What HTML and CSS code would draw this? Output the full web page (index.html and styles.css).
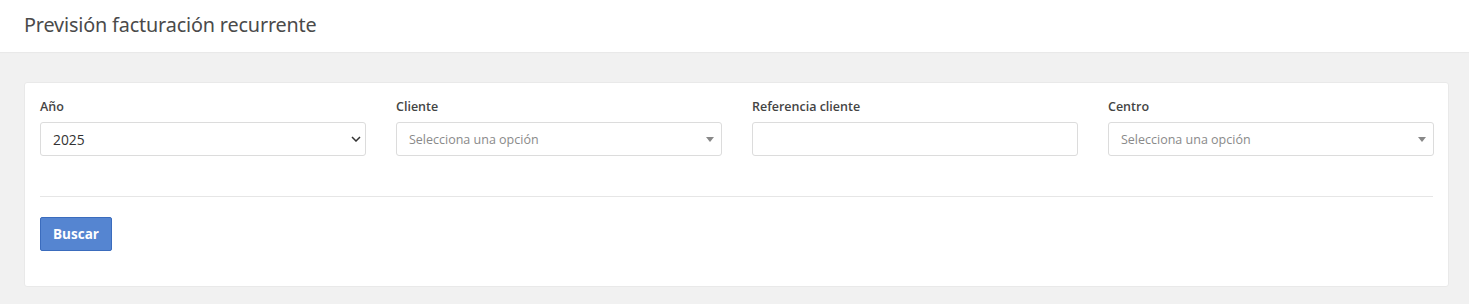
FILE: index.html
```html
<!DOCTYPE html>
<html lang="es">
<head>
<meta charset="utf-8">
<link rel="stylesheet" href="styles.css">
</head>
<body>
<header class="page-header">
  <h1 class="page-title">Previsión facturación recurrente</h1>
</header>
<main class="content">
  <section class="card">
    <div class="filters">
      <div class="field">
        <label class="field-label">Año</label>
        <div class="control control-native">
          <span class="value">2025</span>
          <svg class="chevron" width="10" height="6" viewBox="0 0 10 6"><path d="M1 1 L5 5 L9 1" fill="none" stroke="#333" stroke-width="1.5"/></svg>
        </div>
      </div>
      <div class="field">
        <label class="field-label">Cliente</label>
        <div class="control">
          <span class="placeholder">Selecciona una opción</span>
          <span class="caret"></span>
        </div>
      </div>
      <div class="field">
        <label class="field-label">Referencia cliente</label>
        <div class="control"></div>
      </div>
      <div class="field">
        <label class="field-label">Centro</label>
        <div class="control">
          <span class="placeholder">Selecciona una opción</span>
          <span class="caret"></span>
        </div>
      </div>
    </div>
    <hr class="divider">
    <button class="btn-primary">Buscar</button>
  </section>
</main>
</body>
</html>
```
FILE: styles.css
```css
* { box-sizing: border-box; }
html, body { margin: 0; padding: 0; }
body {
  background: #f1f1f1;
  font-family: "Open Sans", "Noto Sans", sans-serif;
  color: #333;
  width: 1469px;
  height: 304px;
  overflow: hidden;
}
.page-header {
  background: #fff;
  height: 52px;
  padding: 0 24px;
  display: flex;
  align-items: center;
  box-shadow: 0 1px 1px rgba(0,0,0,0.03);
}
.page-title {
  margin: 0;
  font-family: "Noto Sans", "Open Sans", sans-serif;
  font-size: 19.8px;
  font-weight: 400;
  color: #4a4a4a;
  letter-spacing: -0.15px;
  position: relative;
  top: -2px;
}
.content {
  padding: 30px 20px 0 24px;
}
.card {
  background: #fff;
  border: 1px solid #e9e9e9;
  border-radius: 3px;
  padding: 15px 15px 34px 15px;
  height: 205px;
}
.filters {
  display: grid;
  grid-template-columns: repeat(4, 326px);
  column-gap: 30px;
}
.field-label {
  display: block;
  font-size: 12.5px;
  font-weight: 600;
  color: #444;
  line-height: 18px;
  margin-bottom: 6px;
}
.control {
  height: 34px;
  border: 1px solid #dcdcdc;
  border-radius: 3px;
  display: flex;
  align-items: center;
  justify-content: space-between;
  padding: 0 7px 0 12px;
  background: #fff;
}
.control-native {
  padding-right: 4px;
}
.value {
  font-size: 13.8px;
  color: #333;
}
.placeholder {
  font-size: 12.5px;
  color: #8a8a8a;
}
.caret {
  width: 0; height: 0;
  border-left: 4px solid transparent;
  border-right: 4px solid transparent;
  border-top: 5px solid #888;
}
.divider {
  border: 0;
  border-top: 1px solid #e6e6e6;
  margin: 40px 0 20px 0;
}
.btn-primary {
  display: block;
  width: 72px;
  height: 34px;
  background: #5585d1;
  border: 1px solid #3b6cbd;
  border-radius: 2px;
  color: #fff;
  font-family: "Open Sans", "Noto Sans", sans-serif;
  font-weight: 700;
  font-size: 13.5px;
  padding: 0;
}
```
